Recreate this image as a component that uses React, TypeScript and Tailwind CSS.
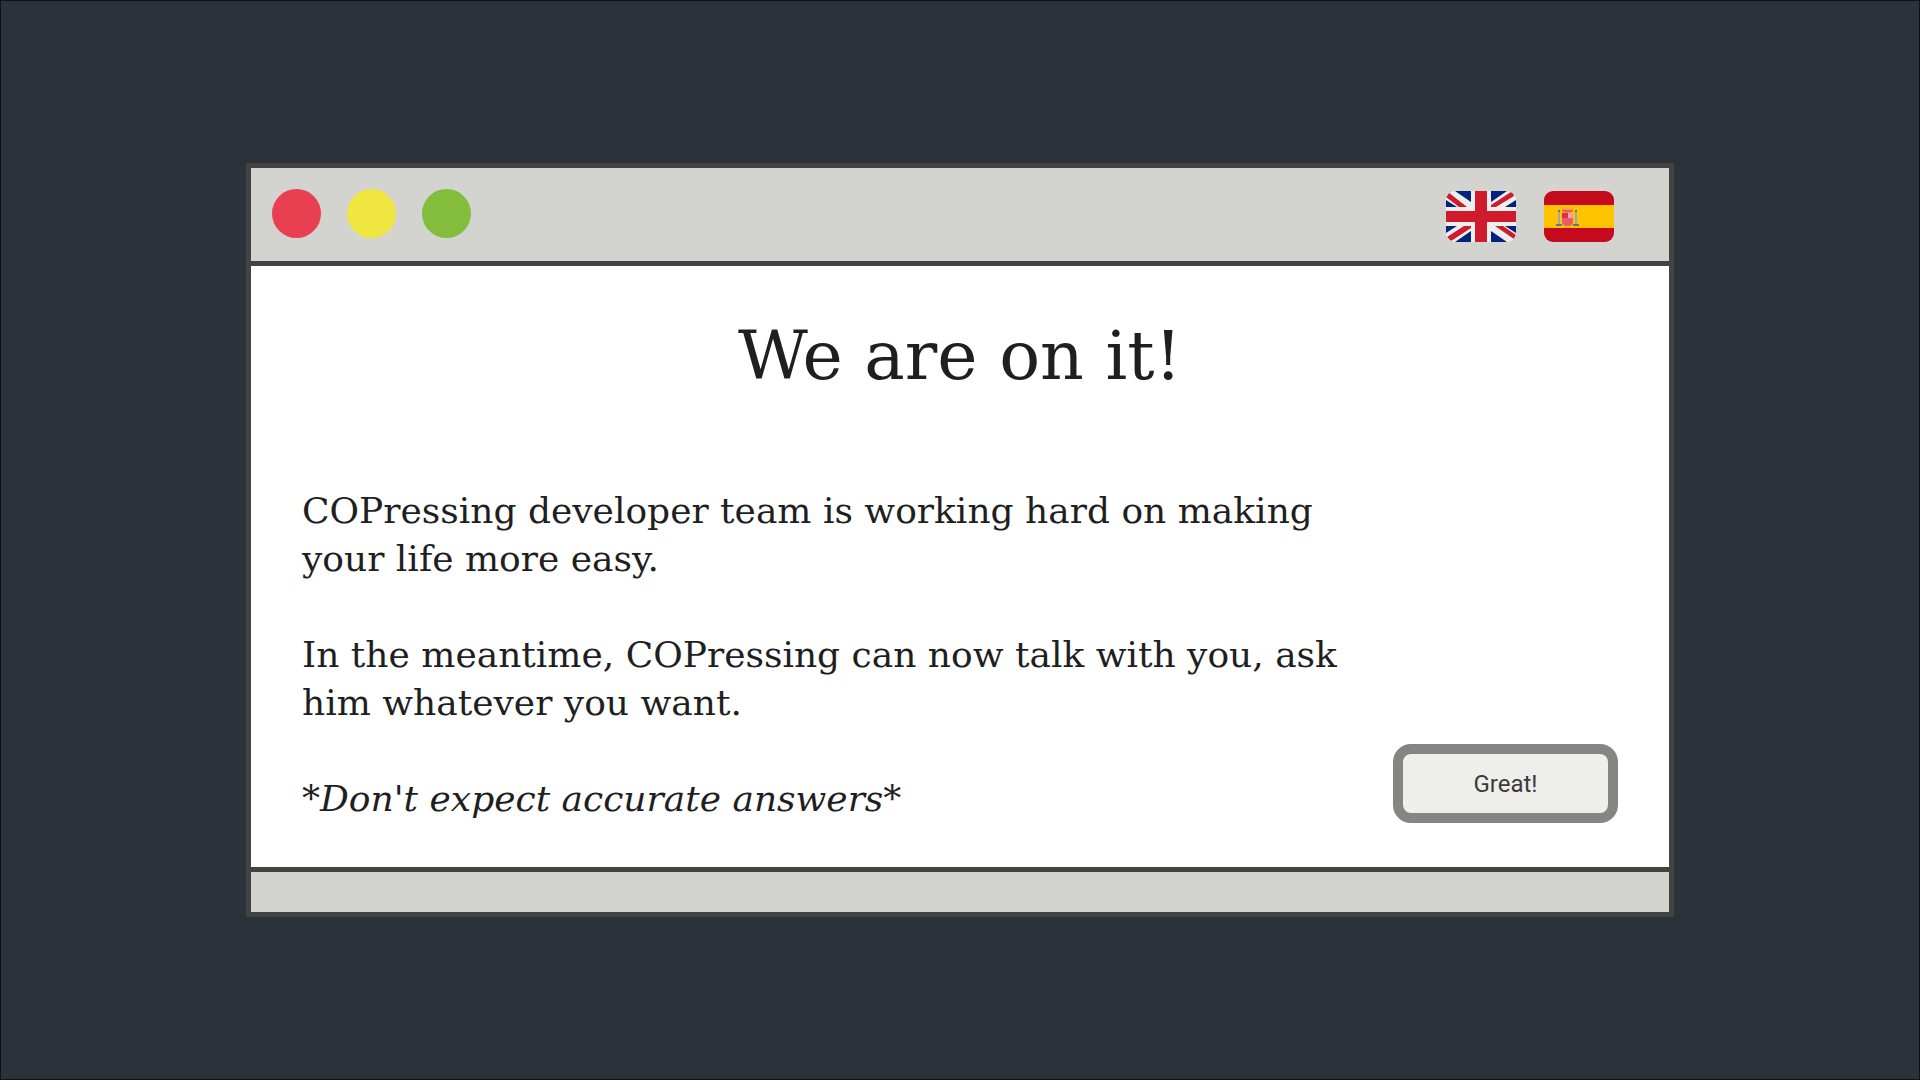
import type { ReactNode } from "react";

type FlagButtonProps = {
  label: string;
  children: ReactNode;
};

const FlagButton = ({ label, children }: FlagButtonProps) => (
  <button type="button" aria-label={label} className="h-[51px] w-[70px] overflow-hidden rounded-[9px]">
    {children}
  </button>
);

const UkFlag = () => (
  <svg viewBox="0 0 70 51" className="block h-full w-full">
    <rect width="70" height="51" fill="#eeeeee" />
    {/* blue corners */}
    <path
      fill="#00247d"
      d="M9 0H25V11ZM0 9V16H11ZM45 0H61L45 11ZM70 9V16H59ZM0 35H11L0 42ZM25 40V51H9ZM59 35H70V42ZM45 40V51H61Z"
    />
    {/* red diagonals */}
    <path
      fill="#cf1b2b"
      d="M2 1L0 4V6L13 16H21ZM65 1L45 14V16H50L68 5L67 2ZM18 35H25V37L5 50L1 46ZM49 35H57L70 44L68 48Z"
    />
    <path fill="#eeeeee" d="M25 0H45V51H25ZM0 16H70V35H0Z" />
    <path fill="#cf1b2b" d="M29 0H41V20H70V31H41V51H29V31H0V20H29Z" />
  </svg>
);

const SpainFlag = () => (
  <svg viewBox="0 0 70 51" className="block h-full w-full">
    <rect width="70" height="51" fill="#c60a1d" />
    <rect y="14" width="70" height="23" fill="#ffc400" />
    <path fill="#ea596e" d="M18 22H29V31Q29 35 23.500 35Q18 35 18 31Z" />
    <path fill="#f4a2b2" d="M24 22H29V27H24Z" />
    <path fill="#dd2e44" d="M18 22H24V27H18Z" />
    <ellipse cx="23.500" cy="19.500" rx="5.500" ry="2" fill="#ea596e" />
    <ellipse cx="23.500" cy="17.500" rx="5.500" ry="1.500" fill="#ffac33" />
    <path fill="#99aab5" d="M14 20H16V33H14ZM31 20H33V33H31Z" />
    <path fill="#66757f" d="M12 33H18V35H12ZM29 33H35V35H29ZM14 19H16V21H14ZM31 19H33V21H31Z" />
  </svg>
);

const dots = ["bg-[#e84050]", "bg-[#efe63f]", "bg-[#84bc3c]"];

const App = () => {
  return (
    <div className="flex min-h-screen items-center justify-center border border-[#111214] bg-[#2c323a]">
      <div className="w-full max-w-[1428px] border-5 border-[#434341] bg-white text-[#1f1f1f]">
        <header className="flex items-start justify-between border-b-5 border-[#434341] bg-[#d3d4cf] pt-[21px] pr-[55px] pb-[19px] pl-[21px]">
          <div className="flex gap-[26px]">
            {dots.map((color) => (
              <span key={color} className={`size-[49px] rounded-full ${color}`} />
            ))}
          </div>
          <div className="flex gap-7 pt-0.5">
            <FlagButton label="English">
              <UkFlag />
            </FlagButton>
            <FlagButton label="Español">
              <SpainFlag />
            </FlagButton>
          </div>
        </header>

        <main className="px-[51px] pt-[46px] pb-11 font-['DejaVu_Serif',serif]">
          <h1 className="text-center text-[68px] leading-[88px]">We are on it!</h1>
          <div className="mt-[87px] flex items-end justify-between">
            <div className="max-w-[1060px] space-y-12 text-[36px] leading-[48px]">
              <p>
                COPressing developer team is working hard on making your life more easy.
              </p>
              <p>
                In the meantime, COPressing can now talk with you, ask him whatever you want.
              </p>
              <p className="italic">*Don't expect accurate answers*</p>
            </div>
            <button
              type="button"
              className="h-[79px] w-[225px] shrink-0 rounded-[18px] border-10 border-[#858583] bg-[#eeeeea] font-[Roboto,sans-serif] text-2xl text-[#3b3b3b]"
            >
              Great!
            </button>
          </div>
        </main>

        <footer className="h-[45px] border-t-5 border-[#434341] bg-[#d3d4cf]" />
      </div>
    </div>
  );
};

export default App;
